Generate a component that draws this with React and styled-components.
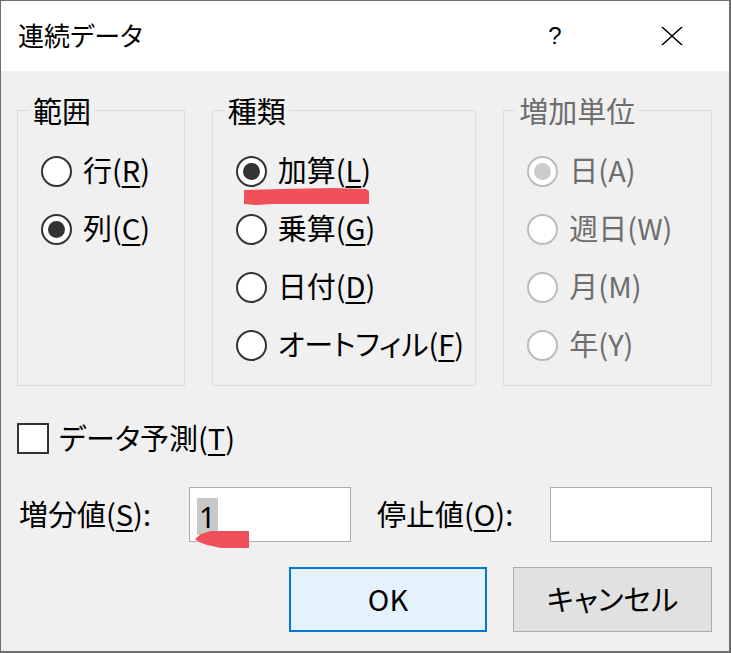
import React from "react";
import styled, { createGlobalStyle } from "styled-components";

const Global = createGlobalStyle`
  html, body {
    margin: 0;
    padding: 0;
    background: #f0f0f0;
  }
  * {
    box-sizing: border-box;
  }
`;

const Dialog = styled.div`
  width: 731px;
  height: 653px;
  position: relative;
  display: flex;
  flex-direction: column;
  background: #f0f0f0;
  border-style: solid;
  border-color: #6e6e6e;
  border-width: 1px 2px 2px 1px;
  font-family: "Noto Sans CJK JP", "Noto Sans", sans-serif;
  font-feature-settings: "palt";
  color: #000;
  overflow: hidden;
`;

const TitleBar = styled.div`
  height: 70px;
  flex: none;
  background: #fff;
  display: flex;
  align-items: center;
  padding-left: 17px;
`;

const Title = styled.div`
  flex: 1;
  font-size: 26px;
  line-height: 1;
  margin-top: -2px;
`;

const TitleButton = styled.div`
  width: ${(p) => p.width}px;
  height: 70px;
  display: flex;
  align-items: center;
  justify-content: center;
  font-family: "Liberation Sans", sans-serif;
  font-size: 24px;
`;

const Body = styled.div`
  flex: 1;
  display: flex;
  flex-direction: column;
  padding: 22px 17px 0 16px;
`;

const GroupRow = styled.div`
  display: flex;
  gap: 27px;
  height: 293px;
`;

const Group = styled.fieldset`
  margin: 0;
  width: ${(p) => p.width}px;
  border: 1px solid #dcdcdc;
  padding: 14px 0 0 23px;
  display: flex;
  flex-direction: column;
`;

const Legend = styled.legend`
  font-size: 29px;
  line-height: 35px;
  padding: 0 3px;
  margin-left: -11px;
  color: ${(p) => (p.disabled ? "#6d6d6d" : "#000")};
`;

const RadioRow = styled.div`
  height: 58px;
  display: flex;
  align-items: center;
  gap: 11px;
  font-size: 29px;
  color: ${(p) => (p.disabled ? "#6d6d6d" : "#000")};
  position: relative;
`;

const RadioCircle = styled.span`
  width: 31px;
  height: 31px;
  flex: none;
  border-radius: 50%;
  border: 2px solid ${(p) => (p.disabled ? "#bcbcbc" : "#333")};
  background: #fff;
  display: flex;
  align-items: center;
  justify-content: center;
  &::after {
    content: "";
    width: 17px;
    height: 17px;
    border-radius: 50%;
    background: ${(p) => (p.disabled ? "#cccccc" : "#333")};
    display: ${(p) => (p.checked ? "block" : "none")};
  }
`;

const Label = styled.span`
  line-height: 1;
  margin-top: -3px;
  white-space: nowrap;
  u {
    text-decoration-thickness: 2px;
    text-underline-offset: 4px;
  }
`;

const CheckRow = styled.div`
  display: flex;
  align-items: center;
  gap: 10px;
  margin-top: 37px;
  font-size: 29px;
`;

const CheckBox = styled.span`
  width: 32px;
  height: 31px;
  flex: none;
  border: 2px solid #333;
  background: #fff;
`;

const FieldRow = styled.div`
  display: flex;
  align-items: center;
  margin-top: 33px;
  font-size: 29px;
  position: relative;
`;

const FieldLabel = styled(Label)`
  width: ${(p) => p.width}px;
  padding-left: 2px;
`;

const Input = styled.div`
  width: 162px;
  height: 55px;
  flex: none;
  background: #fff;
  border: 1px solid #adadad;
  display: flex;
  align-items: center;
  padding-left: 7px;
  margin-right: ${(p) => p.gap || 0}px;
`;

const Selected = styled.span`
  background: #c8c8c8;
  font-size: 29px;
  line-height: 37px;
  height: 37px;
  padding: 0 2px;
  font-family: "Noto Sans", sans-serif;
  margin-top: 4px;
`;

const ButtonRow = styled.div`
  display: flex;
  justify-content: flex-end;
  gap: 26px;
  margin-top: 25px;
`;

const Button = styled.div`
  width: ${(p) => p.width}px;
  height: 65px;
  display: flex;
  align-items: center;
  justify-content: center;
  font-size: 29px;
  background: ${(p) => (p.primary ? "#e5f1fb" : "#e1e1e1")};
  border: ${(p) => (p.primary ? "2px solid #0078d7" : "1px solid #adadad")};
  padding-bottom: 3px;
`;

const Mark = styled.svg`
  position: absolute;
  pointer-events: none;
`;

const CloseIcon = () => (
  <svg width="22" height="20" viewBox="0 0 22 20">
    <path d="M1 1 L21 19 M21 1 L1 19" stroke="#000" strokeWidth="1.6" fill="none" />
  </svg>
);

const Radio = ({ checked, disabled, children }) => (
  <RadioRow disabled={disabled}>
    <RadioCircle checked={checked} disabled={disabled} />
    <Label>{children}</Label>
  </RadioRow>
);

export default function App() {
  return (
    <>
      <Global />
      <Dialog>
        <TitleBar>
          <Title>連続データ</Title>
          <TitleButton width={120}>?</TitleButton>
          <TitleButton width={114}>
            <CloseIcon />
          </TitleButton>
        </TitleBar>
        <Body>
          <GroupRow>
            <Group width={168}>
              <Legend>範囲</Legend>
              <Radio>
                行(<u>R</u>)
              </Radio>
              <Radio checked>
                列(<u>C</u>)
              </Radio>
            </Group>
            <Group width={265}>
              <Legend>種類</Legend>
              <Radio checked>
                加算(<u>L</u>)
              </Radio>
              <Radio>
                乗算(<u>G</u>)
              </Radio>
              <Radio>
                日付(<u>D</u>)
              </Radio>
              <Radio>
                オートフィル(<u>F</u>)
              </Radio>
            </Group>
            <Group width={209}>
              <Legend disabled>増加単位</Legend>
              <Radio checked disabled>
                日(A)
              </Radio>
              <Radio disabled>週日(W)</Radio>
              <Radio disabled>月(M)</Radio>
              <Radio disabled>年(Y)</Radio>
            </Group>
          </GroupRow>
          <CheckRow>
            <CheckBox />
            <Label>
              データ予測(<u>T</u>)
            </Label>
          </CheckRow>
          <FieldRow>
            <FieldLabel width={173}>
              増分値(<u>S</u>):
            </FieldLabel>
            <Input gap={24}>
              <Selected>1</Selected>
            </Input>
            <FieldLabel width={176}>
              停止値(<u>O</u>):
            </FieldLabel>
            <Input />
          </FieldRow>
          <ButtonRow>
            <Button primary width={198}>
              OK
            </Button>
            <Button width={199}>キャンセル</Button>
          </ButtonRow>
        </Body>
        <Mark width="131" height="20" viewBox="0 0 131 20" style={{ left: 241, top: 186 }}>
          <path
            d="M2 3 L40 2 L90 1 L124 2 L127 4 L127 17 L70 17 L30 17 L14 18 L2 17 Z"
            fill="#ef5059"
          />
        </Mark>
        <Mark width="58" height="20" viewBox="0 0 58 20" style={{ left: 192, top: 529 }}>
          <path
            d="M2 9 L8 4 L18 1 L56 1 L56 18 L28 18 L14 15 L6 12 Z"
            fill="#ef5059"
          />
        </Mark>
      </Dialog>
    </>
  );
}
